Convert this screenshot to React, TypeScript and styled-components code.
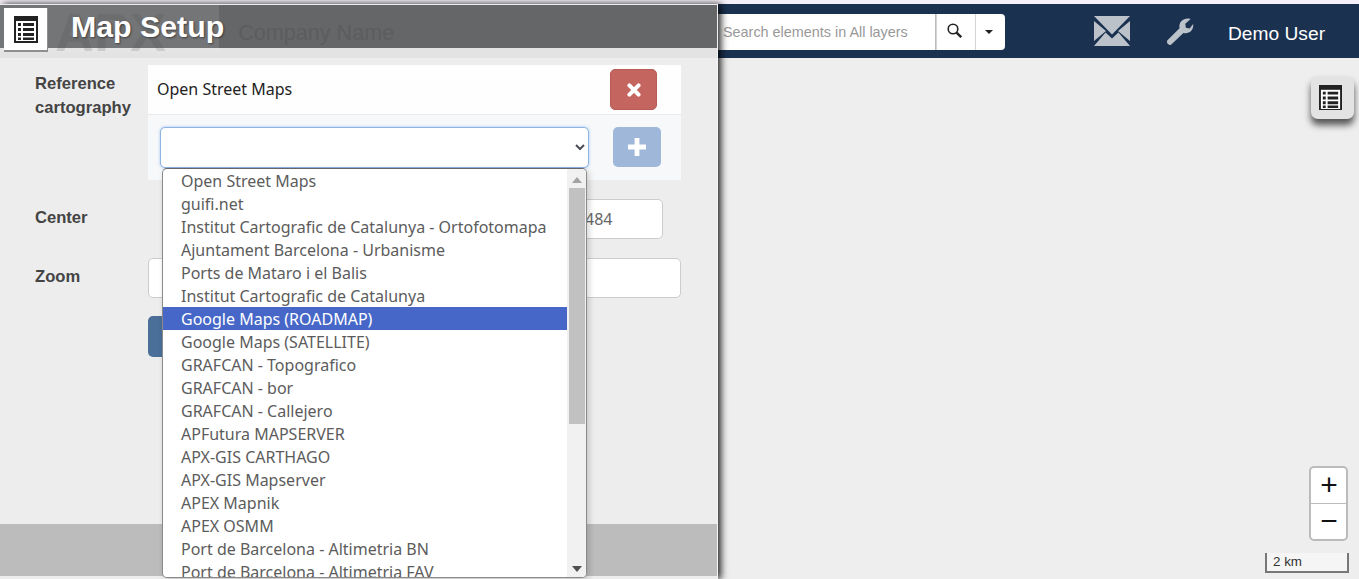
import styled, { createGlobalStyle } from 'styled-components';

const LAYERS = [
  'Open Street Maps',
  'guifi.net',
  'Institut Cartografic de Catalunya - Ortofotomapa',
  'Ajuntament Barcelona - Urbanisme',
  'Ports de Mataro i el Balis',
  'Institut Cartografic de Catalunya',
  'Google Maps (ROADMAP)',
  'Google Maps (SATELLITE)',
  'GRAFCAN - Topografico',
  'GRAFCAN - bor',
  'GRAFCAN - Callejero',
  'APFutura MAPSERVER',
  'APX-GIS CARTHAGO',
  'APX-GIS Mapserver',
  'APEX Mapnik',
  'APEX OSMM',
  'Port de Barcelona - Altimetria BN',
  'Port de Barcelona - Altimetria FAV',
];

const ListIcon = ({ size = 24 }: { size?: number }) => (
  <svg width={size} height={size * 1.125} viewBox="0 0 24 27">
    <path fill="#222" d="M0 0h24v27H0z" />
    <path fill="#fff" d="M2 5h20v20H2z" />
    <path
      fill="#222"
      d="M4 7h3v3H4zM9 7h11v3H9zM4 12h3v3H4zM9 12h11v3H9zM4 17h3v3H4zM9 17h11v3H9zM4 21.5h3v2.5H4zM9 21.5h11v2.5H9z"
    />
  </svg>
);

const App = () => {
  return (
    <>
      <GlobalStyle />
      <Page>
        <Panel>
          <PanelHeader>
            <LogoGhost>APX</LogoGhost>
            <HeaderIcon>
              <ListIcon />
            </HeaderIcon>
            <Title>Map Setup</Title>
            <Company>Company Name</Company>
          </PanelHeader>
          <PanelStrip />
          <Form>
            <Label>
              Reference
              <br />
              cartography
            </Label>
            <LayerTable>
              <LayerRow>
                <LayerName>Open Street Maps</LayerName>
                <RemoveButton aria-label="remove">
                  <svg width="14" height="14" viewBox="0 0 14 14">
                    <path
                      stroke="#fff"
                      strokeWidth="4"
                      strokeLinecap="round"
                      d="M2.400 2.400l9.200 9.200M11.600 2.400l-9.200 9.200"
                    />
                  </svg>
                </RemoveButton>
              </LayerRow>
              <AddRow>
                <LayerSelect defaultValue="">
                  <option value="" />
                </LayerSelect>
                <AddButton aria-label="add">
                  <svg width="18" height="18" viewBox="0 0 18 18">
                    <path fill="#fff" d="M6.600 0h4.800v6.600H18v4.800h-6.600V18H6.600v-6.600H0V6.600h6.600z" />
                  </svg>
                </AddButton>
              </AddRow>
            </LayerTable>
            <Label>Center</Label>
            <CenterField>
              <TextInput $width={141} defaultValue="2.1544484" />
            </CenterField>
            <Label>Zoom</Label>
            <TextInput defaultValue="" />
            <span />
            <SaveButton>Save</SaveButton>
          </Form>
          <PanelFooter />
          <LayerMenu>
            <LayerList>
              {LAYERS.map((name, index) => (
                <LayerOption key={name} $selected={index === 6}>
                  {name}
                </LayerOption>
              ))}
            </LayerList>
            <MenuScrollbar>
              <ScrollArrow $up />
              <ScrollThumb />
              <ScrollArrow />
            </MenuScrollbar>
          </LayerMenu>
        </Panel>
        <Main>
          <Navbar>
            <SearchGroup>
              <SearchInput placeholder="Search elements in All layers" />
              <SearchButton $width={39} aria-label="search">
                <svg width="15" height="15" viewBox="0 0 15 15">
                  <circle cx="6" cy="6" r="4.800" fill="none" stroke="#222" strokeWidth="1.600" />
                  <path stroke="#222" strokeWidth="2.400" d="M9.600 9.600l4.600 4.600" />
                </svg>
              </SearchButton>
              <SearchButton $width={30} aria-label="options">
                <Caret />
              </SearchButton>
            </SearchGroup>
            <NavIcons>
              <svg width="36" height="30" viewBox="0 0 36 30">
                <path
                  fill="#bcc2ca"
                  d="M0 0h36L18 18.500zM0 5l12 10L0 25zM36 5v20L24 15zM0 30l11.500-13.500L18 22.500l6.500-6L36 30z"
                />
              </svg>
              <svg width="28" height="27" viewBox="0 0 28 28">
                <path
                  fill="#bcc2ca"
                  d="M1 23 13.500 10.500C12.500 5.500 16 .5 22 .5c1.500 0 2.500.3 3 .6L19.500 6l.5 4 4 1 3.600-4.700C28.500 12 24 17 17.500 15.500L5 27.500c-1 1-2.500.5-3.500-.5S0 24.500 1 23z"
                />
              </svg>
            </NavIcons>
            <UserName>Demo User</UserName>
          </Navbar>
          <MapArea>
            <MapListButton>
              <ListIcon size={23} />
            </MapListButton>
            <ZoomControl>
              <ZoomButton>+</ZoomButton>
              <ZoomButton>−</ZoomButton>
            </ZoomControl>
            <ScaleLine>2 km</ScaleLine>
          </MapArea>
        </Main>
      </Page>
    </>
  );
};

export default App;

const GlobalStyle = createGlobalStyle`
  html, body {
    margin: 0;
    padding: 0;
    background: #f6f1f8;
    overflow: hidden;
  }
  * {
    box-sizing: border-box;
  }
`;

const Page = styled.div`
  display: flex;
  width: 1359px;
  height: 579px;
  padding-top: 4px;
  overflow: hidden;
  font-family: 'Liberation Sans', Arial, sans-serif;
`;

const Panel = styled.aside`
  position: relative;
  z-index: 2;
  display: flex;
  flex-direction: column;
  flex: 0 0 718px;
  height: 575px;
  padding-top: 1px;
  background: #ededed;
  border-right: 1px solid #f4f4f4;
  box-shadow: 3px 0 7px rgba(0, 0, 0, 0.85);
`;

const PanelHeader = styled.header`
  position: relative;
  display: flex;
  align-items: center;
  flex: 0 0 43px;
  padding-left: 71px;
  background: #656667;
`;

const LogoGhost = styled.div`
  position: absolute;
  top: 0;
  left: 0;
  width: 219px;
  height: 47px;
  padding-left: 55px;
  background: rgba(255, 255, 255, 0.1);
  color: rgba(70, 70, 70, 0.16);
  font-size: 54px;
  font-weight: 700;
  line-height: 54px;
  overflow: hidden;
`;

const HeaderIcon = styled.div`
  position: absolute;
  top: 3px;
  left: 4px;
  display: flex;
  align-items: center;
  justify-content: center;
  width: 44px;
  height: 44px;
  background: #fff;
  border-right: 1px solid #8f8f8f;
  border-bottom: 2px solid #8f8f8f;
`;

const Title = styled.h1`
  position: relative;
  margin: 0;
  padding-top: 1px;
  color: #fff;
  font-size: 30.3px;
  font-weight: 700;
  line-height: 42px;
  text-shadow: 1px 1px 2px rgba(0, 0, 0, 0.45);
`;

const Company = styled.span`
  margin-left: 14px;
  padding-top: 13px;
  color: #5c5d5e;
  font-size: 21.6px;
`;

const PanelStrip = styled.div`
  flex: 0 0 10px;
  background: #e3e3e3;
`;

const Form = styled.form`
  display: grid;
  grid-template-columns: 113px 533px;
  grid-auto-rows: min-content;
  row-gap: 19px;
  padding: 7px 0 0 35px;
`;

const Label = styled.label`
  padding-top: 7px;
  color: #444;
  font-size: 16.6px;
  font-weight: 700;
  line-height: 24px;
`;

const LayerTable = styled.div`
  display: flex;
  flex-direction: column;
`;

const LayerRow = styled.div`
  display: flex;
  align-items: center;
  justify-content: space-between;
  height: 50px;
  padding: 0 24px 0 9px;
  background: #fefefe;
  border-bottom: 1px solid #e8e9eb;
`;

const LayerName = styled.span`
  padding-bottom: 1px;
  color: #222;
  font-family: 'Noto Sans', sans-serif;
  font-size: 16px;
`;

const RemoveButton = styled.button`
  display: flex;
  align-items: center;
  justify-content: center;
  width: 47px;
  height: 41px;
  padding: 0;
  background: #c4655f;
  border: 1px solid #b95c56;
  border-radius: 5px;
`;

const AddRow = styled.div`
  display: flex;
  align-items: flex-start;
  gap: 24px;
  height: 65px;
  padding: 12px 0 0 12px;
  background: #f6f8fa;
`;

const LayerSelect = styled.select`
  width: 429px;
  height: 41px;
  background: #fff;
  border: 1px solid #8db4e2;
  border-radius: 5px;
  box-shadow: 0 0 3px rgba(102, 160, 233, 0.6);
  color: #4a4f55;
  outline: none;
`;

const AddButton = styled.button`
  display: flex;
  align-items: center;
  justify-content: center;
  width: 48px;
  height: 40px;
  padding: 0;
  background: #9fb7d9;
  border: none;
  border-radius: 5px;
`;

const CenterField = styled.div`
  display: flex;
  justify-content: flex-end;
  padding-right: 18px;
`;

const TextInput = styled.input<{ $width?: number }>`
  width: ${({ $width }) => ($width ? `${$width}px` : '100%')};
  height: 40px;
  padding: 0 12px;
  background: #fff;
  border: 1px solid #ccc;
  border-radius: 5px;
  color: #666;
  font-family: 'Noto Sans', sans-serif;
  font-size: 16px;
`;

const SaveButton = styled.button`
  width: 100px;
  height: 41px;
  margin-top: -1px;
  background: #4a6f99;
  border: none;
  border-radius: 5px;
  color: #fff;
  font-size: 15px;
`;

const PanelFooter = styled.footer`
  flex: 0 0 52px;
  margin-top: auto;
  margin-bottom: 3px;
  background: #bcbcbc;
`;

const LayerMenu = styled.div`
  position: absolute;
  top: 164px;
  left: 162px;
  display: flex;
  width: 425px;
  height: 410px;
  overflow: hidden;
  background: #fff;
  border: 1px solid #8a8a8a;
  border-top-color: #666;
  border-radius: 5px;
  box-shadow: 2px 2px 6px rgba(0, 0, 0, 0.18);
`;

const LayerList = styled.ul`
  flex: 1;
  margin: 0;
  padding: 0;
  list-style: none;
`;

const LayerOption = styled.li<{ $selected?: boolean }>`
  height: 23px;
  padding-left: 18px;
  background: ${({ $selected }) => ($selected ? '#4667c8' : 'transparent')};
  color: ${({ $selected }) => ($selected ? '#fff' : '#5c5c5c')};
  font-family: 'Noto Sans', sans-serif;
  font-size: 16px;
  line-height: 24px;
  white-space: nowrap;
`;

const MenuScrollbar = styled.div`
  display: flex;
  flex-direction: column;
  align-items: center;
  flex: 0 0 19px;
  background: #f1f1f1;
`;

const ScrollArrow = styled.div<{ $up?: boolean }>`
  flex: 0 0 auto;
  margin: ${({ $up }) => ($up ? '8px 0 5px' : 'auto 0 5px')};
  border-left: 5px solid transparent;
  border-right: 5px solid transparent;
  border-top: ${({ $up }) => ($up ? 'none' : '6px solid #505050')};
  border-bottom: ${({ $up }) => ($up ? '6px solid #a3a3a3' : 'none')};
`;

const ScrollThumb = styled.div`
  width: 16px;
  height: 236px;
  background: #c1c1c1;
`;

const Main = styled.main`
  display: flex;
  flex-direction: column;
  flex: 1;
  min-width: 0;
`;

const Navbar = styled.nav`
  display: flex;
  align-items: center;
  flex: 0 0 54px;
  background: #1a3150;
`;

const SearchGroup = styled.div`
  display: flex;
  height: 36px;
  margin-top: 2px;
`;

const SearchInput = styled.input`
  width: 218px;
  height: 36px;
  padding: 0 0 0 5px;
  background: #fff;
  border: none;
  border-right: 1px solid #bbb;
  font-family: 'Liberation Sans', Arial, sans-serif;
  font-size: 14.4px;
  &::placeholder {
    color: #999;
    opacity: 1;
  }
`;

const SearchButton = styled.button<{ $width: number }>`
  display: flex;
  align-items: center;
  justify-content: center;
  width: ${({ $width }) => $width}px;
  height: 36px;
  padding: 0 3px 4px 0;
  background: #fff;
  border: none;
  border-left: 1px solid #d5d5d5;
  &:last-child {
    border-radius: 0 4px 4px 0;
  }
`;

const Caret = styled.span`
  margin-top: 4px;
  border-left: 4px solid transparent;
  border-right: 4px solid transparent;
  border-top: 4px solid #222;
`;

const NavIcons = styled.div`
  display: flex;
  align-items: center;
  gap: 36px;
  margin-left: 89px;
`;

const UserName = styled.span`
  margin-left: 34px;
  padding-top: 5px;
  color: #fff;
  font-size: 19.2px;
`;

const MapArea = styled.section`
  position: relative;
  flex: 1;
  background: #eee;
`;

const MapListButton = styled.button`
  position: absolute;
  top: 18px;
  right: 5px;
  display: flex;
  align-items: center;
  justify-content: center;
  width: 43px;
  height: 43px;
  padding: 0 4px 0 0;
  background: #e3e3e3;
  border: none;
  border-radius: 7px;
  box-shadow: 0 6px 7px rgba(0, 0, 0, 0.65);
`;

const ZoomControl = styled.div`
  position: absolute;
  top: 408px;
  right: 11px;
  display: flex;
  flex-direction: column;
  width: 39px;
  height: 75px;
  background: #fff;
  border: 2px solid #bbb;
  border-radius: 5px;
`;

const ZoomButton = styled.button`
  flex: 1;
  padding: 0 0 2px 1px;
  background: transparent;
  border: none;
  color: #111;
  font-family: 'Liberation Sans', Arial, sans-serif;
  font-size: 30px;
  font-weight: 400;
  line-height: 1;
  &:first-child {
    border-bottom: 1px solid #bbb;
  }
`;

const ScaleLine = styled.div`
  position: absolute;
  top: 495px;
  right: 10px;
  width: 84px;
  height: 20px;
  padding: 0 0 0 6px;
  background: #f5f5f5;
  border: 2px solid #777;
  border-top: none;
  color: #333;
  font-size: 13.4px;
  line-height: 18px;
`;
